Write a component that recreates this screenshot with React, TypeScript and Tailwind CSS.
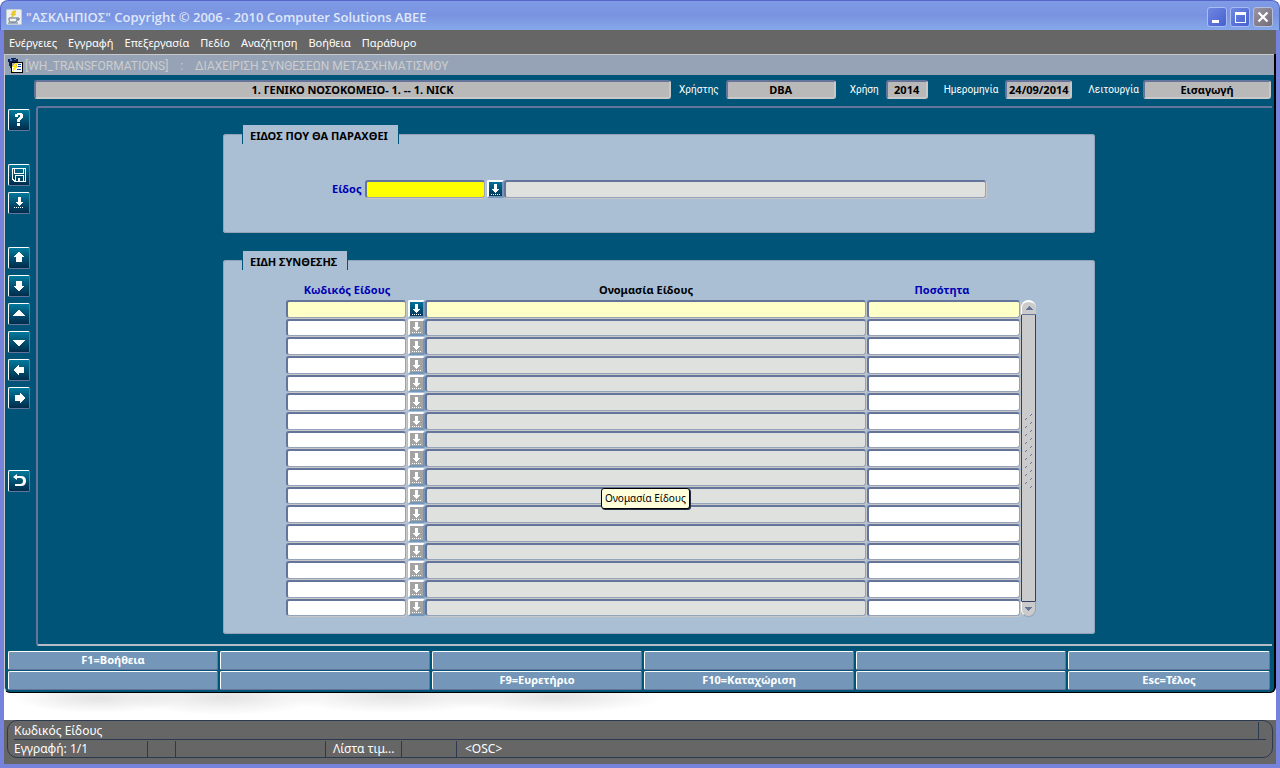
import React from 'react';

const menuItems = ['Ενέργειες', 'Εγγραφή', 'Επεξεργασία', 'Πεδίο', 'Αναζήτηση', 'Βοήθεια', 'Παράθυρο'];

const functionKeys = [
  'F1=Βοήθεια', '', '', '', '', '',
  '', '', 'F9=Ευρετήριο', 'F10=Καταχώριση', '', 'Esc=Τέλος',
];

const rows = Array.from({ length: 17 }, (_, i) => i);

const sunken =
  'block rounded-[3px] border-t-2 border-l-2 border-r border-b border-t-[#64749a] border-l-[#64749a] border-r-[#94a3b8] border-b-[#94a3b8] shadow-[1px_1px_0_#c8c8c8] outline-none';

const HeaderField: React.FC<{ id: string; label?: string; value: string; width: string; gap?: string }> = ({
  id,
  label,
  value,
  width,
  gap = '',
}) => (
  <>
    {label && (
      <label htmlFor={id} className={`${gap} shrink-0 font-['Roboto','Noto_Sans',sans-serif] text-[10px] leading-4 text-white`}>
        {label}
      </label>
    )}
    <input
      id={id}
      readOnly
      aria-label={label ?? 'Νοσοκομείο'}
      value={value}
      className={`${width} h-[19px] min-w-0 rounded-[3px] border-2 border-t-[#64749a] border-l-[#64749a] border-r-[#c8c8c8] border-b-[#c8c8c8] bg-[#b9b9b9] text-center text-[11px] font-bold text-black outline-none`}
    />
  </>
);

const ListArrow: React.FC = () => (
  <svg width="13" height="13" viewBox="0 0 13 13" fill="currentColor" shapeRendering="crispEdges" aria-hidden="true">
    <path d="M5 1h3v5h2v1H9v1H8v1H7v1H6V9H5V8H4V7H3V6h2z" />
    <path d="M2 11h1v1H2zM4 11h1v1H4zM6 11h1v1H6zM8 11h1v1H8zM10 11h1v1h-1z" />
  </svg>
);

const ListButton: React.FC<{ active?: boolean; short?: boolean }> = ({ active = false, short = false }) => (
  <button
    type="button"
    aria-label="Λίστα τιμών"
    className={`flex w-[17px] shrink-0 items-center justify-center overflow-hidden rounded-[2px] border-2 border-t-white border-l-white border-r-[#7497b9] border-b-[#7497b9] text-white ${
      short ? 'h-[17px]' : 'h-[18px]'
    } ${active ? 'bg-linear-to-b from-[#007299] to-[#00375a]' : 'bg-[#a3a3a3]'}`}
  >
    <ListArrow />
  </button>
);

const ToolButton: React.FC<{ label: string; children: React.ReactNode }> = ({ label, children }) => (
  <button
    type="button"
    aria-label={label}
    className="flex size-[22px] items-center justify-center rounded-[2px] border border-t-white border-l-white border-r-[#64749a] border-b-[#64749a] bg-linear-to-b from-[#007a9c] to-[#002c4c] text-white"
  >
    <svg width="20" height="20" viewBox="0 0 20 20" fill="currentColor" shapeRendering="crispEdges" aria-hidden="true">
      {children}
    </svg>
  </button>
);

const Panel: React.FC<{ title: string; children: React.ReactNode }> = ({ title, children }) => (
  <fieldset className="w-full max-w-[872px] min-w-0 rounded-[3px] border border-[#94a3b8] bg-[#aabfd4]">
    <legend className="ml-[18px] h-[19px] border-x border-[#005478] bg-[#aabfd4] pt-1 pr-[10px] pl-[7px] text-[11px] leading-[14px] font-bold text-black">
      {title}
    </legend>
    {children}
  </fieldset>
);

const TitleBar: React.FC = () => (
  <header className="flex h-[30px] items-center rounded-t-lg border-x border-t border-[#5565c8] bg-linear-to-b from-[#7f9be6] via-[#7a93e0] to-[#86a8ea] pr-[6px] pl-[5px]">
    <svg width="16" height="16" viewBox="0 0 16 16" aria-hidden="true" className="mt-0.5">
      <rect x=".5" y=".5" width="15" height="15" rx="1" fill="#eef0f2" stroke="#c4ccd8" />
      <path d="M7 2h3L8 5h2L5 9l2-3H5z" fill="#f2cf1c" stroke="#d8b010" strokeWidth=".5" />
      <path d="M3 9h8v2q0 2-2 2H5q-2 0-2-2zM11 9h2v2h-2M2 14h10" fill="none" stroke="#5f7488" />
    </svg>
    <h1 className="mt-0.5 ml-[4px] flex-1 font-['Open_Sans','Noto_Sans',sans-serif] text-[13px] leading-5 font-semibold text-[#dfe8fa]">
      "ΑΣΚΛΗΠΙΟΣ" Copyright © 2006 - 2010 Computer Solutions ABEE
    </h1>
    <div className="mt-0.5 flex gap-[3px]">
      <button type="button" aria-label="Minimize" className="size-5 rounded-[3px] border border-[#a9bcf3] bg-linear-to-br from-[#7087e0] to-[#4660cf]">
        <svg viewBox="0 0 18 18" shapeRendering="crispEdges"><path d="M4 12h7v3H4z" fill="#fff" /></svg>
      </button>
      <button type="button" aria-label="Maximize" className="size-5 rounded-[3px] border border-[#a9bcf3] bg-linear-to-br from-[#7087e0] to-[#4660cf]">
        <svg viewBox="0 0 18 18" shapeRendering="crispEdges"><path d="M4 4h11v11H4zM5 7v7h9V7z" fill="#fff" fillRule="evenodd" /></svg>
      </button>
      <button type="button" aria-label="Close" className="size-5 rounded-[3px] border border-[#b4bfe0] bg-linear-to-br from-[#9a94a4] to-[#746c78]">
        <svg viewBox="0 0 18 18"><path d="M4.500 4.500l9 9M13.500 4.500l-9 9" stroke="#fff" strokeWidth="2.200" /></svg>
      </button>
    </div>
  </header>
);

const Toolbar: React.FC = () => (
  <aside className="flex w-[31px] shrink-0 flex-col gap-[33px] pt-[3px] pl-[3px]">
    <ToolButton label="Βοήθεια">
      <path d="M6 4h2V3h5v1h1v4h-1v1h-1v1h-1v2H8v-3h1V8h1V7h1V5H9v2H6zM8 13h3v3H8z" />
    </ToolButton>
    <div className="flex flex-col gap-1.5">
      <ToolButton label="Αποθήκευση">
        <path d="M3 3h14v14H5v-1H4v-1H3zM4 4v10h1v1h1v-5h9v6h1V4h-1v5H5V4zM6 4v4h8V4zM7 11v5h2v-3h2v3h3v-5z" fillRule="evenodd" />
      </ToolButton>
      <ToolButton label="Λίστα">
        <path d="M9 4h3v5h2v1h-1v1h-1v1h-1v1h-1v-1H9v-1H8v-1H7V9h2z" />
        <path d="M5 14h1v1H5zM7 14h1v1H7zM9 14h1v1H9zM11 14h1v1h-1zM13 14h1v1h-1z" />
      </ToolButton>
    </div>
    <div className="flex flex-col gap-1.5">
      <ToolButton label="Προηγούμενη ομάδα">
        <path d="M9 4h2v1h1v1h1v1h1v1h1v1h-2v5H7V9H5V8h1V7h1V6h1V5h1z" />
      </ToolButton>
      <ToolButton label="Επόμενη ομάδα">
        <path d="M7 5h6v5h2v1h-1v1h-1v1h-1v1h-1v1H9v-1H8v-1H7v-1H6v-1H5v-1h2z" />
      </ToolButton>
      <ToolButton label="Προηγούμενη εγγραφή">
        <path d="M9 6h2v1h1v1h1v1h1v1h1v1h1v1H4v-1h1v-1h1V9h1V8h1V7h1z" />
      </ToolButton>
      <ToolButton label="Επόμενη εγγραφή">
        <path d="M4 8h12v1h-1v1h-1v1h-1v1h-1v1h-1v1H9v-1H8v-1H7v-1H6v-1H5V9H4z" />
      </ToolButton>
      <ToolButton label="Προηγούμενο πεδίο">
        <path d="M9 5h1v2h5v6h-5v2H9v-1H8v-1H7v-1H6v-1H5V9h1V8h1V7h1V6h1z" />
      </ToolButton>
      <ToolButton label="Επόμενο πεδίο">
        <path d="M11 5h1v1h1v1h1v1h1v1h1v2h-1v1h-1v1h-1v1h-1v1h-1v-2H6V7h5z" />
      </ToolButton>
    </div>
    <div className="pt-7">
      <ToolButton label="Επιστροφή">
        <path d="M4 6l4-3v2h4q5 0 5 5t-5 5H6v-2h5q3 0 3-3t-3-3H8v2z" shapeRendering="auto" />
      </ToolButton>
    </div>
  </aside>
);

const ScrollBar: React.FC = () => (
  <div className="mt-5 flex w-[15px] shrink-0 flex-col">
    <button type="button" aria-label="Πάνω" className="flex h-[15px] items-center justify-center rounded-t-full border-t-2 border-b border-l border-t-white border-b-[#64749a] border-l-white bg-[#cbcbcb]">
      <svg width="7" height="4" viewBox="0 0 7 4" shapeRendering="crispEdges"><path d="M3 0h1v1h1v1h1v1h1v1H0V3h1V2h1V1h1z" fill="#64749a" /></svg>
    </button>
    <div className="flex flex-1 items-center justify-center border-x border-[#005478] bg-[#cbcbcb]">
      <svg width="9" height="76" className="mt-[-12px]" shapeRendering="crispEdges" aria-hidden="true">
        <defs>
          <pattern id="grip" width="9" height="8" patternUnits="userSpaceOnUse">
            <path d="M6 1h1v1H6zM7 0h1v1H7zM1 5h1v1H1zM2 4h1v1H2z" fill="#64749a" />
          </pattern>
        </defs>
        <rect width="9" height="76" fill="url(#grip)" />
      </svg>
    </div>
    <button type="button" aria-label="Κάτω" className="flex h-4 items-center justify-center rounded-b-full border-t border-l border-r border-b border-t-[#33405f] border-l-white border-r-[#94a3b8] border-b-[#94a3b8] bg-[#cbcbcb]">
      <svg width="7" height="4" viewBox="0 0 7 4" shapeRendering="crispEdges"><path d="M0 0h7v1H6v1H5v1H4v1H3V3H2V2H1V1H0z" fill="#64749a" /></svg>
    </button>
  </div>
);

const ItemsTable: React.FC = () => (
  <table className="min-w-0 flex-1 table-fixed border-collapse text-[11px] leading-[14px]">
    <thead>
      <tr className="h-5">
        <th className="w-[122px] p-0 text-[#0000b4]">Κωδικός Είδους</th>
        <th className="w-[17px] p-0" />
        <th className="p-0">Ονομασία Είδους</th>
        <th className="w-[154px] p-0 pr-1 text-[#0000b4]">Ποσότητα</th>
      </tr>
    </thead>
    <tbody>
      {rows.map((i) => {
        // every third row is a pixel shorter
        const short = i % 3 === 1;
        const height = short ? 'h-[17px]' : 'h-[18px]';
        const active = i === 0;
        return (
          <tr key={i}>
            <td className="p-0 pr-0.5 pb-px">
              <input aria-label="Κωδικός Είδους" className={`${sunken} ${height} w-full ${active ? 'bg-[#ffffc8]' : 'bg-white'}`} />
            </td>
            <td className="p-0 pb-px">
              <ListButton active={active} short={short} />
            </td>
            <td className="p-0 pr-px pb-px">
              <input aria-label="Ονομασία Είδους" readOnly className={`${sunken} ${height} w-full ${active ? 'bg-[#ffffc8]' : 'bg-[#dfe1df]'}`} />
            </td>
            <td className="p-0 pr-px pb-px">
              <input aria-label="Ποσότητα" className={`${sunken} ${height} w-full ${active ? 'bg-[#ffffc8]' : 'bg-white'}`} />
            </td>
          </tr>
        );
      })}
    </tbody>
  </table>
);

const StatusBar: React.FC = () => (
  <footer className="h-11 bg-[#666] px-[3px] text-[12px] leading-[17px] text-white">
    <div className="flex h-[38px] flex-col rounded-[10px] border border-[#2a3850] px-1.5">
      <div className="flex h-[19px] border-b border-[#2a3850] pt-px pr-[7px]">
        <span className="flex-1 border-r border-[#2a3850]">Κωδικός Είδους</span>
      </div>
      <div className="flex py-px">
        <span className="h-4 w-[134px] border-r border-[#2a3850] leading-4">Εγγραφή: 1/1</span>
        <span className="h-4 w-7 border-r border-[#2a3850]" />
        <span className="h-4 w-[150px] border-r border-[#2a3850]" />
        <span className="h-4 w-[76px] border-r border-[#2a3850] pl-[7px] leading-4">Λίστα τιμ...</span>
        <span className="h-4 w-[55px] border-r border-[#2a3850]" />
        <span className="pl-2 leading-4">&lt;OSC&gt;</span>
      </div>
    </div>
  </footer>
);

const App: React.FC = () => {
  return (
    <div className="flex min-h-screen flex-col bg-white font-['Noto_Sans','Open_Sans',sans-serif] text-black">
      <TitleBar />
      <div className="flex flex-1 flex-col border-x-4 border-b-4 border-[#7583dc]">
        <nav className="flex h-6 gap-[11px] bg-[#666] pt-px pl-[5px] text-[11px] leading-6 text-white">
          {menuItems.map((item) => (
            <button key={item} type="button">{item}</button>
          ))}
        </nav>

        <main className="flex flex-col rounded-b-md border-r-2 border-b border-l border-r-black border-b-black border-l-[#c8c8c8] bg-[#005478]">
          <div className="flex h-[21px] items-center gap-px border-t border-[#c8c8c8] bg-[#96a3b6] pl-0.5 text-[12px] text-[#cdcdcd]">
            <svg width="17" height="17" viewBox="0 0 17 17" shapeRendering="crispEdges" aria-hidden="true">
              <path d="M1 2h3V1h5v1h2v3H6v6H3V9H2V5H1z" fill="#10224c" />
              <path d="M3 2h2v2H3zM7 2h2v1H7z" fill="#5078c8" />
              <path d="M4 5h12v11H4z" fill="#000" />
              <path d="M5 6h10v9H5z" fill="#fff" />
              <path d="M5 6h5v4H5z" fill="#a8a8a8" />
              <path d="M11 7h3v1h-3zM11 9h3v1h-3zM10 12h4v1h-4z" fill="#1844a8" />
              <path d="M8 6h3L9 9h2l-6 6 2-5H5z" fill="#ffe820" />
            </svg>
            <h2 className="pt-0.5 font-['Roboto',sans-serif] leading-4 whitespace-pre">{'[WH_TRANSFORMATIONS]    :    ΔΙΑΧΕΙΡΙΣΗ ΣΥΝΘΕΣΕΩΝ ΜΕΤΑΣΧΗΜΑΤΙΣΜΟΥ'}</h2>
          </div>

          <div className="flex h-[31px] items-center pr-[3px] pb-0.5 pl-[29px]">
            <HeaderField id="hospital" value="1. ΓΕΝΙΚΟ ΝΟΣΟΚΟΜΕΙΟ- 1. -- 1. NICK" width="flex-1" />
            <HeaderField id="user" label="Χρήστης" value="DBA" width="ml-[7px] w-[110px]" gap="ml-2" />
            <HeaderField id="year" label="Χρήση" value="2014" width="ml-[7px] w-[42px]" gap="ml-[14px]" />
            <HeaderField id="date" label="Ημερομηνία" value="24/09/2014" width="ml-[7px] w-[67px]" gap="ml-4" />
            <HeaderField id="mode" label="Λειτουργία" value="Εισαγωγή" width="ml-[4px] w-[128px]" gap="ml-4" />
          </div>

          <div className="flex pr-0.5">
            <Toolbar />
            <div className="flex h-[540px] flex-1 flex-col items-center gap-[18px] rounded-l-[3px] border-t-2 border-b-2 border-l-2 border-t-[#64749a] border-b-[#b4bcc8] border-l-[#64749a] pt-[17px] pl-2">
              <Panel title="ΕΙΔΟΣ ΠΟΥ ΘΑ ΠΑΡΑΧΘΕΙ">
                <div className="flex pt-9 pr-[108px] pb-[34px] pl-[108px]">
                  <label htmlFor="item" className="mr-1 w-[29px] text-right text-[11px] leading-[18px] font-bold text-[#0000b4]">Είδος</label>
                  <input id="item" className={`${sunken} mr-[2px] h-[18px] w-[120px] bg-[#ffff00]`} />
                  <ListButton active />
                  <input aria-label="Περιγραφή είδους" readOnly className={`${sunken} h-[18px] min-w-0 flex-1 bg-[#dfe1df]`} />
                </div>
              </Panel>
              <Panel title="ΕΙΔΗ ΣΥΝΘΕΣΗΣ">
                <div className="relative flex pt-2.5 pr-[58px] pb-4 pl-[62px]">
                  <ItemsTable />
                  <ScrollBar />
                  <div role="tooltip" className="absolute top-[218px] left-[377px] rounded-[3px] border border-black bg-[#ffffdc] px-[3px] text-[10px] leading-[19px] whitespace-nowrap text-black shadow-[1px_1px_0_#1f2a44]">
                    Ονομασία Είδους
                  </div>
                </div>
              </Panel>
            </div>
          </div>

          <div className="grid grid-cols-[repeat(5,210fr)_202fr] gap-x-0.5 gap-y-px pt-[5px] pr-1 pb-0.5 pl-[3px]">
            {functionKeys.map((key, i) => (
              <button
                key={i}
                type="button"
                aria-label={key || 'Κενό πλήκτρο'}
                className="flex h-[19px] justify-center rounded-[2px] border border-t-white border-l-white border-r-[#64749a] border-b-[#64749a] bg-[#7497b9] text-[11px] leading-4 font-bold text-white"
              >
                {key}
              </button>
            ))}
          </div>
        </main>

        <div className="min-h-[27px] flex-1 bg-white">
          <svg width="660" height="22" aria-hidden="true">
            <defs>
              <radialGradient id="shade">
                <stop offset="0" stopColor="#888" stopOpacity=".24" />
                <stop offset="1" stopColor="#888" stopOpacity="0" />
              </radialGradient>
            </defs>
            <ellipse cx="95" cy="5" rx="85" ry="15" fill="url(#shade)" />
            <ellipse cx="220" cy="4" rx="100" ry="18" fill="url(#shade)" />
            <ellipse cx="390" cy="3" rx="110" ry="17" fill="url(#shade)" />
            <ellipse cx="550" cy="4" rx="110" ry="16" fill="url(#shade)" />
          </svg>
        </div>
        <StatusBar />
      </div>
    </div>
  );
};

export default App;
